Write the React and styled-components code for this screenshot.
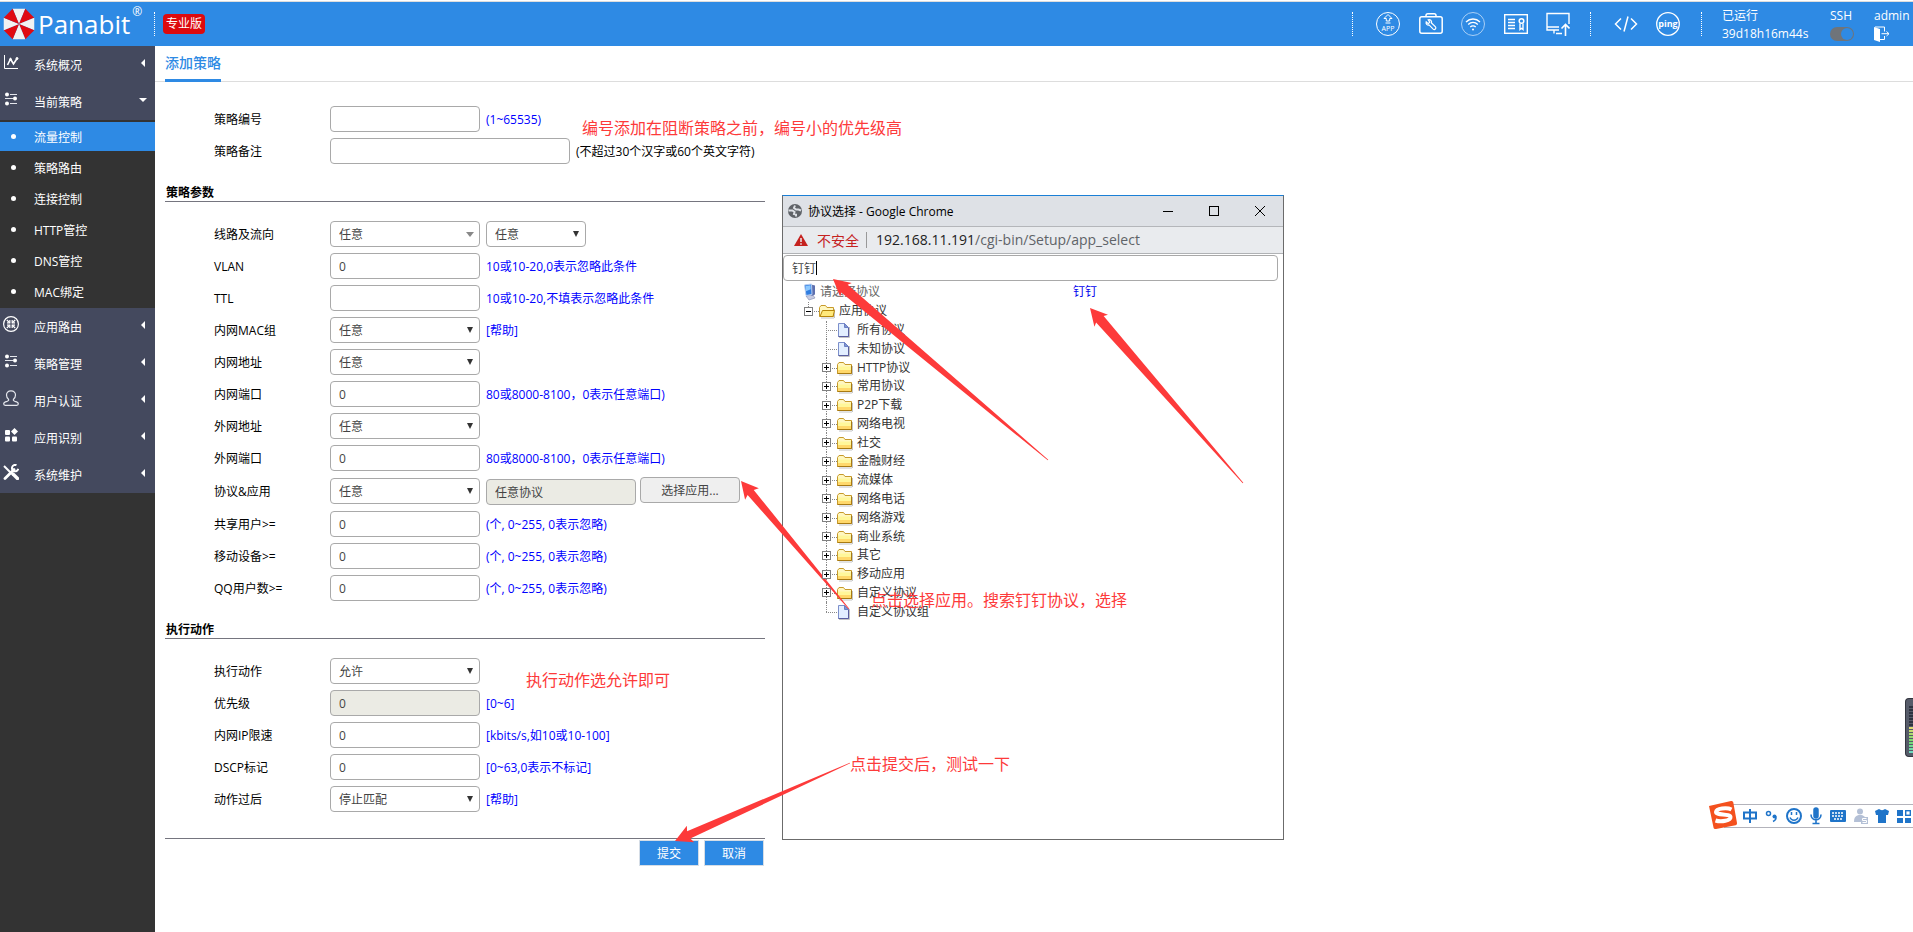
import React from 'react'
// style
import styled, { createGlobalStyle, css } from 'styled-components'

const BLUE = '#2e8ae4'
const RED = '#fd3a3a'

const subMenu = ['流量控制', '策略路由', '连接控制', 'HTTP管控', 'DNS管控', 'MAC绑定']

const menu = [
    { icon: 'chart', name: '系统概况' },
    { icon: 'sliders', name: '当前策略', children: subMenu },
    { icon: 'route', name: '应用路由' },
    { icon: 'sliders', name: '策略管理' },
    { icon: 'user', name: '用户认证' },
    { icon: 'apps', name: '应用识别' },
    { icon: 'tools', name: '系统维护' },
]

const portHint = '80或8000-8100，0表示任意端口)'
const countHint = '(个, 0~255, 0表示忽略)'

const tree = [
    { name: '所有协议', leaf: true },
    { name: '未知协议', leaf: true },
    { name: 'HTTP协议' },
    { name: '常用协议' },
    { name: 'P2P下载' },
    { name: '网络电视' },
    { name: '社交' },
    { name: '金融财经' },
    { name: '流媒体' },
    { name: '网络电话' },
    { name: '网络游戏' },
    { name: '商业系统' },
    { name: '其它' },
    { name: '移动应用' },
    { name: '自定义协议' },
    { name: '自定义协议组', leaf: true },
]

const MenuIcon = ({ name }) => {
    const icons = {
        chart: (
            <g fill="none" stroke="#fff">
                <path d="M1.5 1v13.5H15" />
                <path d="M4.5 11l3-6 3 5L14 4.5" strokeWidth="1.6" />
                <circle cx="7.5" cy="5.5" r="1" fill="#fff" />
                <circle cx="14" cy="4.5" r="1" fill="#fff" />
            </g>
        ),
        sliders: (
            <g stroke="#e4e6ec" strokeWidth="1.2" fill="#fff">
                <path d="M7 3.5h7M2 7.5h8M7 12.5h7" />
                <circle cx="4" cy="3.5" r="2" stroke="none" />
                <circle cx="12" cy="7.5" r="2" stroke="none" />
                <circle cx="4" cy="12.5" r="2" stroke="none" />
            </g>
        ),
        route: (
            <g fill="none" stroke="#fff" strokeWidth="1.2">
                <circle cx="8" cy="8" r="7.4" />
                <path d="M3.8 4l3 2.8M12.2 4l-3 2.8M3.8 12l3-2.8M12.2 12l-3-2.8" />
                <path d="M6.8 4v2.8H4M9.200 4v2.800H12M6.800 12V9.200H4M9.200 12V9.200H12" />
            </g>
        ),
        user: (
            <g fill="none" stroke="#e4e6ec" strokeWidth="1.2">
                <path d="M8 .8c-3 0-4.500 2-4.500 4.200 0 2 .9 3.300 2 4.300.4 1 .2 1.500-1.500 2-2 .5-3.300 1-3.300 2.500 0 1 .6 1.500 1.500 1.500h11.600c.9 0 1.500-.5 1.500-1.500 0-1.500-1.300-2-3.300-2.500-1.700-.5-1.900-1-1.500-2 1.100-1 2-2.300 2-4.300C12.500 2.800 11 .8 8 .8z" />
            </g>
        ),
        apps: (
            <g fill="#fff">
                <rect x="2" y="3" width="5" height="5" rx="1" />
                <path d="M11.5 1L15 4.500 11.500 8 8 4.500z" />
                <rect x="2" y="9.500" width="5" height="5" rx="1" />
                <rect x="9" y="9.500" width="5" height="5" rx="1" />
            </g>
        ),
        tools: (
            <g stroke="#fff" fill="none">
                <path d="M1 2l8 8" strokeWidth="2" />
                <path d="M10 10l4.500 4.500" strokeWidth="3.400" strokeLinecap="round" />
                <path d="M2 14.500L11 5.500" strokeWidth="2.800" strokeLinecap="round" />
                <path d="M13.500 1.200a3.200 3.200 0 1 0 1.800 3.600" strokeWidth="2" />
            </g>
        ),
    }
    return (
        <svg width="16" height="16" viewBox="0 0 16 16" aria-hidden="true">
            {icons[name]}
        </svg>
    )
}

// octagon cut in eight sectors, white and red by turns
const UmbrellaLogo = () => {
    const point = (i) => {
        const a = ((i * 45 - 112.5) * Math.PI) / 180
        return `${17 + 16.5 * Math.cos(a)},${17 + 16.5 * Math.sin(a)}`
    }
    return (
        <svg width="34" height="34" viewBox="0 0 34 34" aria-hidden="true">
            {[0, 1, 2, 3, 4, 5, 6, 7].map((i) => (
                <polygon key={i} points={`17,17 ${point(i)} ${point(i + 1)}`} fill={i % 2 ? '#e00a12' : '#f2f2f2'} />
            ))}
        </svg>
    )
}

const HeaderIcon = ({ name }) => {
    const icons = {
        app: (
            <>
                <circle cx="12" cy="12" r="11.5" />
                <path d="M12 2.500L8 6.500h2.300V9h3.400V6.500H16z" />
                <path d="M9.500 11h5" />
                <text x="12" y="19" textAnchor="middle" fontSize="7" fill="#fff" stroke="none">APP</text>
            </>
        ),
        toolbox: (
            <>
                <rect x=".8" y="4.800" width="22.400" height="16.400" rx="2" strokeWidth="1.500" />
                <path d="M7 4.500V3.500c0-1.200.6-1.800 1.800-1.800h6.400c1.200 0 1.800.6 1.800 1.800v1" strokeWidth="1.500" />
                <path d="M9.200 7.800c1.900-.6 3.900.9 3.300 3.200l4 3.800c1.200 1.500-.8 3.500-2.300 2.300l-3.900-4c-2.200.5-3.700-1.300-3.100-3.200l2 1.700 1.600-1.500z" strokeWidth="1.200" />
            </>
        ),
        wifi: (
            <>
                <circle cx="12" cy="12" r="11.5" stroke="#a9cff5" />
                <path d="M5 10c4-4 10-4 14 0M7.200 12.500c2.800-2.800 6.800-2.800 9.600 0M9.300 15c1.500-1.600 3.900-1.600 5.400 0" strokeWidth="1.300" />
                <circle cx="12" cy="17.500" r="1" fill="#fff" stroke="none" />
            </>
        ),
        licence: (
            <>
                <rect x=".7" y="2.700" width="22.600" height="18.600" strokeWidth="1.400" />
                <path d="M4 7.500h7M4 10.500h7M4 13.500h7M4 16.500h7" strokeWidth="1.400" />
                <circle cx="17.500" cy="9" r="2.300" strokeWidth="1.500" />
                <path d="M16 11.500v6l1.500-1.200 1.500 1.200v-6" strokeWidth="1.400" />
            </>
        ),
        monitor: (
            <>
                <path d="M13 18H1V1.500h22V12" strokeWidth="1.400" />
                <path d="M1 15h12M8 18v3.500M10 21.500h6" strokeWidth="1.400" />
                <path d="M19.500 24V12.500M15.500 16.500l4-4 4 4" strokeWidth="1.600" />
            </>
        ),
        code: <path d="M7 6.500L1.500 12 7 17.500M17 6.500l5.500 5.500L17 17.500M14 4.500l-4 15" strokeWidth="1.500" />,
        ping: (
            <>
                <circle cx="12" cy="12" r="11.3" strokeWidth="1.3" />
                <text x="12" y="15" textAnchor="middle" fontSize="9" fontWeight="700" fill="#fff" stroke="none">ping</text>
            </>
        ),
    }
    return (
        <svg width="24" height="24" viewBox="0 0 24 24" fill="none" stroke="#fff" aria-hidden="true">
            {icons[name]}
        </svg>
    )
}

const Caret = ({ wide }) => (
    <CaretSvg width="8" height="8" viewBox="0 0 8 8" aria-hidden="true">
        <path d={wide ? 'M0 2h8L4 7z' : 'M1 1h6L4 7z'} fill={wide ? '#888' : '#333'} />
    </CaretSvg>
)

const Picker = ({ id, value, small, wide, label }) => (
    <PickerBox $small={small}>
        <Select id={id} aria-label={label} defaultValue={value}>
            <option>{value}</option>
        </Select>
        <Caret wide={wide} />
    </PickerBox>
)

const Field = ({ id, label, hint, help, plainHint, select, wide, children, ...rest }) => (
    <FieldRow>
        <label htmlFor={id}>{label}</label>
        {select ? <Picker id={id} value={select} wide={wide} /> : <Input id={id} {...rest} />}
        {children}
        {hint && <Hint $plain={plainHint}>{hint}</Hint>}
        {help && <HelpLink href="#help">[帮助]</HelpLink>}
    </FieldRow>
)

const FolderIcon = ({ open }) => (
    <svg width="18" height="16" viewBox="0 0 18 16" aria-hidden="true">
        <path d="M2 15h13M15.500 6v9" stroke="#c4c4c4" fill="none" />
        <path d="M.5 13.500v-9L2 2.500h4.500l1.500 2h6.500v9z" fill="#fff7c0" stroke="#c79a2b" />
        {open
            ? <path d="M3.500 7.500h12l-1.500 6H1z" fill="#ffe97c" stroke="#b8860b" />
            : (
                <>
                    <path d="M1 6.500h13v4H1z" fill="#fff79a" />
                    <path d="M1 10h13v3H1z" fill="#ffd86b" />
                    <path d="M.5 13.500h14v-8" fill="none" stroke="#a87a12" />
                </>
            )}
    </svg>
)

const PageIcon = () => (
    <svg width="18" height="16" viewBox="0 0 18 16" aria-hidden="true">
        <path d="M2 15.500h10.500V5" stroke="#c4c4c4" fill="none" />
        <path d="M1.500 1.500h6l4 4v9h-10z" fill="#e3efff" stroke="#7c8fcb" />
        <path d="M7.500 1.500v4h4z" fill="#7f96cf" stroke="#6b7fc4" />
        <path d="M11.500 6v8.500h-10" stroke="#5a5fa0" fill="none" />
    </svg>
)

const ComputerIcon = () => (
    <svg width="18" height="18" viewBox="0 0 18 18" aria-hidden="true">
        <path d="M6 13l7-1 2 3-6 2z" fill="#c7cbe0" stroke="#8088b0" strokeWidth=".6" />
        <path d="M11 1.500l4 1v9l-3.500 1.500z" fill="#5d6fae" />
        <path d="M4.500 2l7-1 .5 10.500-6 1z" fill="#2f7de0" stroke="#b9cdf0" />
        <path d="M5.500 3l5-.8.2 4-4.700 2z" fill="#8cc8ff" />
    </svg>
)

const Expander = ({ open }) => (
    <svg width="9" height="9" viewBox="0 0 9 9" aria-hidden="true">
        <rect x=".5" y=".5" width="8" height="8" fill="#fff" stroke="#808080" />
        <path d={open ? 'M2 4.500h5' : 'M2 4.500h5M4.500 2v5'} stroke="#000" />
    </svg>
)

// tapered arrow: a broad head at the tip, a shaft that thins out to the tail
const arrowPoints = ({ tip, tail, neck }) => {
    const dx = tail[0] - tip[0]
    const dy = tail[1] - tip[1]
    const len = Math.hypot(dx, dy)
    const at = (along, side) => {
        const x = tip[0] + (dx * along - dy * side) / len
        const y = tip[1] + (dy * along + dx * side) / len
        return `${x},${y}`
    }
    return [at(0, 0), at(17, 9), at(15, neck), at(len, 0.4), at(len, -0.4), at(15, -neck), at(17, -9)].join(' ')
}

const arrows = [
    { tip: [833, 279], tail: [1048, 460], neck: 5 },
    { tip: [1090, 308], tail: [1243, 483], neck: 5 },
    { tip: [741, 481], tail: [849, 609], neck: 4 },
    { tip: [675, 841], tail: [850, 763], neck: 4 },
]

const notes = [
    { x: 582, y: 116, text: '编号添加在阻断策略之前，编号小的优先级高' },
    { x: 871, y: 588, text: '点击选择应用。搜索钉钉协议，选择' },
    { x: 526, y: 668, text: '执行动作选允许即可' },
    { x: 850, y: 752, text: '点击提交后，测试一下' },
]

const TopBar = () => (
    <Header>
        <Brand>
            <UmbrellaLogo />
            <strong>Panabit</strong>
            <sup>®</sup>
        </Brand>
        <Dots />
        <Edition>专业版</Edition>
        <HeaderRight>
            <Dots />
            <IconNav $wide>
                {['app', 'toolbox', 'wifi', 'licence', 'monitor'].map((name) => (
                    <a href={`#${name}`} key={name} aria-label={name}><HeaderIcon name={name} /></a>
                ))}
            </IconNav>
            <Dots />
            <IconNav>
                {['code', 'ping'].map((name) => (
                    <a href={`#${name}`} key={name} aria-label={name}><HeaderIcon name={name} /></a>
                ))}
            </IconNav>
            <Dots />
            <Status $width={108}>
                <span>已运行</span>
                <span>39d18h16m44s</span>
            </Status>
            <Status $width={44}>
                <label htmlFor="ssh">SSH</label>
                <Toggle id="ssh" type="checkbox" />
            </Status>
            <Status $width={39}>
                <span>admin</span>
                <a href="#logout" aria-label="logout">
                    <svg width="16" height="16" viewBox="0 0 16 16" aria-hidden="true">
                        <path d="M0 1l6 2v13l-6-2z" fill="#fff" />
                        <path d="M1 1h9.500v4.500M10.500 10v3.500H6M7.500 7.700H15M12.500 5.500L15 7.700l-2.500 2.300" fill="none" stroke="#fff" />
                    </svg>
                </a>
            </Status>
        </HeaderRight>
    </Header>
)

const SideMenu = () => (
    <Sidebar>
        {menu.map((item) => (
            <React.Fragment key={item.name}>
                <MenuItem href="#menu">
                    <MenuIcon name={item.icon} />
                    <span>{item.name}</span>
                    <svg width="8" height="8" viewBox="0 0 8 8" aria-hidden="true">
                        <path d={item.children ? 'M0 2h8L4 6z' : 'M6 0v8L2 4z'} fill="#fff" />
                    </svg>
                </MenuItem>
                {item.children && (
                    <SubMenu>
                        {item.children.map((child, i) => (
                            <li key={child}><SubLink href="#sub" $active={i === 0}>{child}</SubLink></li>
                        ))}
                    </SubMenu>
                )}
            </React.Fragment>
        ))}
    </Sidebar>
)

const PolicyForm = () => (
    <Form onSubmit={(e) => e.preventDefault()}>
        <Fields>
            <Field id="number" label="策略编号" hint="(1~65535)" />
            <Field id="remark" label="策略备注" hint="(不超过30个汉字或60个英文字符)" plainHint $long />
        </Fields>
        <SectionTitle>策略参数</SectionTitle>
        <Fields>
            <Field id="line" label="线路及流向" select="任意" wide>
                <Picker value="任意" small label="流向" />
            </Field>
            <Field id="vlan" label="VLAN" defaultValue="0" hint="10或10-20,0表示忽略此条件" />
            <Field id="ttl" label="TTL" hint="10或10-20,不填表示忽略此条件" />
            <Field id="macgroup" label="内网MAC组" select="任意" help />
            <Field id="inaddr" label="内网地址" select="任意" />
            <Field id="inport" label="内网端口" defaultValue="0" hint={portHint} />
            <Field id="outaddr" label="外网地址" select="任意" />
            <Field id="outport" label="外网端口" defaultValue="0" hint={portHint} />
            <Field id="app" label="协议&应用" select="任意">
                <AppPick>
                    <Input aria-label="已选协议" defaultValue="任意协议" readOnly $muted />
                    <PickButton type="button">选择应用...</PickButton>
                </AppPick>
            </Field>
            <Field id="shared" label="共享用户>=" defaultValue="0" hint={countHint} />
            <Field id="mobile" label="移动设备>=" defaultValue="0" hint={countHint} />
            <Field id="qq" label="QQ用户数>=" defaultValue="0" hint={countHint} />
        </Fields>
        <SectionTitle>执行动作</SectionTitle>
        <Fields>
            <Field id="action" label="执行动作" select="允许" />
            <Field id="priority" label="优先级" defaultValue="0" readOnly $muted hint="[0~6]" />
            <Field id="iplimit" label="内网IP限速" defaultValue="0" hint="[kbits/s,如10或10-100]" />
            <Field id="dscp" label="DSCP标记" defaultValue="0" hint="[0~63,0表示不标记]" />
            <Field id="after" label="动作过后" select="停止匹配" help />
        </Fields>
        <Actions>
            <button type="submit">提交</button>
            <button type="button">取消</button>
        </Actions>
    </Form>
)

const ProtocolWindow = () => (
    <Window>
        <TitleBar>
            <svg width="16" height="16" viewBox="0 0 16 16" aria-hidden="true">
                <circle cx="8" cy="8" r="7" fill="#5f6368" />
                <path d="M1.500 7.500h4l2 1.500-.5 2 2 .5v2M8 2.500l-1 2.500 2 1.500h2.500l2.500 1" stroke="#dee1e6" strokeWidth="2" fill="none" />
            </svg>
            <span>协议选择 - Google Chrome</span>
            <WindowButton type="button" aria-label="minimize">
                <svg width="10" height="10" viewBox="0 0 10 10"><path d="M0 5.500h10" stroke="#000" /></svg>
            </WindowButton>
            <WindowButton type="button" aria-label="maximize">
                <svg width="10" height="10" viewBox="0 0 10 10"><rect x=".5" y=".5" width="9" height="9" fill="none" stroke="#000" /></svg>
            </WindowButton>
            <WindowButton type="button" aria-label="close">
                <svg width="10" height="10" viewBox="0 0 10 10"><path d="M0 0l10 10M10 0L0 10" stroke="#000" /></svg>
            </WindowButton>
        </TitleBar>
        <AddressBar>
            <svg width="16" height="14" viewBox="0 0 16 14" aria-hidden="true">
                <path d="M8 1l7 12H1z" fill="#c5221f" />
                <path d="M8 5v4M8 10.300v1.500" stroke="#e9ebee" strokeWidth="1.5" />
            </svg>
            <em>不安全</em>
            <p>192.168.11.191<span>/cgi-bin/Setup/app_select</span></p>
        </AddressBar>
        <SearchBox>
            <input aria-label="搜索协议" defaultValue="钉钉" />
            <i />
        </SearchBox>
        <WindowBody>
            <Tree>
                <TreeHead><ComputerIcon />请选择协议</TreeHead>
                <TreeItem $depth={0}>
                    <Guide $open><Expander open /></Guide>
                    <FolderIcon open />
                    应用协议
                </TreeItem>
                {tree.map((node, i) => (
                    <TreeItem key={node.name} $depth={1}>
                        <Guide $last={i === tree.length - 1}>{!node.leaf && <Expander />}</Guide>
                        {node.leaf ? <PageIcon /> : <FolderIcon />}
                        {node.name}
                    </TreeItem>
                ))}
            </Tree>
            <ResultLink href="#dingding">钉钉</ResultLink>
        </WindowBody>
    </Window>
)

const InputMethodBar = () => (
    <ImeBar>
        <svg width="28" height="28" viewBox="0 0 28 28" aria-hidden="true">
            <path d="M0 5L22 0c1.500 0 2 .5 2.300 1.500L28 22c0 1.500-.5 2-1.500 2.300L7 28c-1.500 0-2.300-.5-2.500-1.500z" fill="#f4511e" />
            <path d="M22.500 8.500c-5-2.500-15-1-15.500 2.500-.3 3.500 14 1.500 14.500 5 .3 3.500-9 5.500-15 3.500" stroke="#fff" strokeWidth="4" fill="none" />
        </svg>
        <svg width="176" height="20" viewBox="0 0 176 20" fill="none" stroke="#1f74c9" aria-hidden="true">
            <path d="M7 6.500h12v6H7zM13 3v14" strokeWidth="2" />
            <circle cx="31.5" cy="7.5" r="2" strokeWidth="1.5" />
            <circle cx="37.5" cy="10.5" r="2" fill="#1f74c9" stroke="none" />
            <path d="M38.800 10.500c.5 2-.5 4-2.800 5" strokeWidth="1.6" />
            <circle cx="57" cy="10" r="7" strokeWidth="2" />
            <path d="M54.500 6v3M59.500 6v3M53 11.500c1.500 3.500 6.500 3.500 8 0" strokeWidth="1.5" />
            <path d="M79 4v6" strokeWidth="5.5" strokeLinecap="round" />
            <path d="M74 8.500c0 7 10 7 10 0M79 14v4M75.500 17.500h7" strokeWidth="1.6" />
            <rect x="93" y="4" width="16" height="12" rx="1" fill="#1f74c9" stroke="none" />
            <path d="M95 7h12M95 10h12M97 13h8" stroke="#fff" strokeWidth="1.5" strokeDasharray="2 1" />
            <g fill="#b4c0d6" stroke="none">
                <circle cx="123" cy="5.5" r="3" />
                <path d="M117 16c0-5 2-7 6-7s5 2 5 3v4z" />
                <rect x="124" y="11" width="7" height="7" />
                <path d="M129.500 12.500h-4v2h4v2h-4" fill="none" stroke="#fff" />
            </g>
            <path d="M142 3l-4 2 1 4h2v8h8V9h2l1-4-4-2c-1.500 1.500-4.500 1.500-6 0z" fill="#1f74c9" stroke="none" />
            <path d="M160 4h6v6h-6zM160 12h6v5h-6zM168 12h6v5h-6z" fill="#1f74c9" stroke="none" />
            <rect x="168.7" y="4.7" width="4.6" height="4.6" strokeWidth="1.4" />
        </svg>
    </ImeBar>
)

const VolumeGauge = () => (
    <Gauge>
        {Array.from({ length: 16 }, (_, i) => (
            <i key={i} style={{ background: i < 7 ? '#2e3340' : `hsl(${60 + (i - 7) * 13}, 60%, 65%)` }} />
        ))}
    </Gauge>
)

const App = () => {
    return (
        <Page>
            <GlobalStyle />
            <TopBar />
            <Columns>
                <SideMenu />
                <Content>
                    <Tabs><a href="#add">添加策略</a></Tabs>
                    <PolicyForm />
                </Content>
            </Columns>
            <ProtocolWindow />
            <ArrowLayer aria-hidden="true">
                {arrows.map((arrow) => (
                    <polygon key={arrow.tip[0]} points={arrowPoints(arrow)} fill={RED} />
                ))}
            </ArrowLayer>
            {notes.map((note) => (
                <Note key={note.text} $x={note.x} $y={note.y}>{note.text}</Note>
            ))}
            <VolumeGauge />
            <InputMethodBar />
        </Page>
    )
}

const GlobalStyle = createGlobalStyle`
    * {
        box-sizing: border-box;
    }
    body {
        margin: 0;
        background: #fff;
        color: #000;
        font-size: 12px;
    }
    body, input, select, button {
        font-family: "Open Sans", "Noto Sans CJK SC", sans-serif;
    }
    a {
        text-decoration: none;
    }
    svg {
        flex-shrink: 0;
    }
`

const Page = styled.div`
    position: relative;
    display: flex;
    flex-direction: column;
    min-height: 100vh;
    padding-top: 1px;
    overflow: hidden;
`

const Header = styled.header`
    display: flex;
    align-items: center;
    height: 45px;
    padding-left: 2px;
    border-top: 1px solid #ddd;
    background: ${BLUE};
    color: #fff;
`

const Brand = styled.div`
    display: flex;
    align-items: center;
    gap: 2px;
    width: 152px;
    strong {
        font-size: 26px;
        font-weight: 400;
        line-height: 36px;
    }
    sup {
        align-self: flex-start;
        font-size: 12px;
        line-height: 12px;
    }
`

const Dots = styled.span`
    height: 24px;
    border-left: 1px dotted #fff;
`

const Edition = styled.span`
    margin-left: 8px;
    padding: 0 3px;
    border-radius: 4px;
    background: #dd0a0e;
    line-height: 20px;
`

const HeaderRight = styled.div`
    display: flex;
    align-items: center;
    margin-left: auto;
`

const IconNav = styled.nav`
    display: flex;
    justify-content: space-between;
    width: ${({ $wide }) => ($wide ? '194px' : '66px')};
    margin: 0 ${({ $wide }) => ($wide ? '20px' : '21px')} 0 23px;
    a {
        display: flex;
    }
`

const Status = styled.div`
    display: flex;
    flex-direction: column;
    gap: 2px;
    width: ${({ $width }) => $width}px;
    padding-top: 2px;
    line-height: 16px;
    &:nth-last-child(3) {
        margin-left: 20px;
    }
    a {
        display: flex;
    }
`

const Toggle = styled.input`
    appearance: none;
    width: 24px;
    height: 14px;
    margin: 1px 0;
    border-radius: 7px;
    background: #6f747a;
    &::after {
        content: '';
        display: block;
        width: 12px;
        height: 12px;
        margin: 1px 1px 1px 11px;
        border-radius: 6px;
        background: ${BLUE};
    }
`

const Columns = styled.div`
    display: flex;
    flex: 1;
`

const Sidebar = styled.nav`
    flex: 0 0 155px;
    background: #333;
`

const MenuItem = styled.a`
    display: flex;
    align-items: flex-start;
    height: 37px;
    padding: 8px 8px 0 3px;
    background: #44495e;
    color: #fff;
    span {
        flex: 1;
        margin-left: 15px;
        line-height: 23px;
    }
    svg:last-child {
        margin-top: 5px;
    }
`

const SubMenu = styled.ul`
    margin: 0;
    padding: 2px 0 0;
    list-style: none;
`

const SubLink = styled.a`
    display: flex;
    align-items: center;
    height: 29px;
    margin-bottom: 2px;
    padding-left: 11px;
    background: ${({ $active }) => ($active ? BLUE : 'transparent')};
    color: #fff;
    &::before {
        content: '';
        width: 5px;
        height: 5px;
        margin-right: 18px;
        border-radius: 50%;
        background: #fff;
    }
`

const Content = styled.main`
    flex: 1;
`

const Tabs = styled.div`
    display: flex;
    height: 36px;
    padding-left: 10px;
    border-bottom: 1px solid #ddd;
    a {
        height: 36px;
        border-bottom: 3px solid ${BLUE};
        color: ${BLUE};
        font-size: 14px;
        font-weight: 500;
        line-height: 33px;
    }
`

const Form = styled.form`
    max-width: 600px;
    margin: 24px 0 0 10px;
`

const Fields = styled.div`
    display: flex;
    flex-direction: column;
    gap: 6px;
`

const FieldRow = styled.div`
    display: flex;
    align-items: center;
    gap: 6px;
    padding-left: 49px;
    white-space: nowrap;
    > label {
        width: 110px;
    }
`

const control = css`
    height: 26px;
    padding: 0 8px;
    border: 1px solid #a9a9a9;
    border-radius: 4px;
    background: #fff;
    color: #444;
    font-size: 12px;
`

const Input = styled.input`
    ${control}
    width: ${({ $long }) => ($long ? '240px' : '150px')};
    background: ${({ $muted }) => ($muted ? '#ebebe4' : '#fff')};
`

const PickerBox = styled.div`
    position: relative;
    width: ${({ $small }) => ($small ? '100px' : '150px')};
`

const Select = styled.select`
    ${control}
    appearance: none;
    display: block;
    width: 100%;
`

const CaretSvg = styled.svg`
    position: absolute;
    top: 9px;
    right: 6px;
    pointer-events: none;
`

const AppPick = styled.div`
    display: flex;
    gap: 4px;
    height: 28px;
    input {
        align-self: flex-end;
    }
`

const PickButton = styled.button`
    ${control}
    width: 100px;
    background: #efefef;
`

const Hint = styled.span`
    color: ${({ $plain }) => ($plain ? '#000' : '#00f')};
`

const HelpLink = styled.a`
    color: #00f;
`

const SectionTitle = styled.h2`
    margin: 20px 0 19px;
    padding-left: 1px;
    border-bottom: 1px solid #75757f;
    font-size: 12px;
    font-weight: 700;
    line-height: 17px;
`

const Actions = styled.div`
    display: flex;
    justify-content: flex-end;
    gap: 5px;
    margin-top: 26px;
    padding: 1px 1px 0 0;
    border-top: 1px solid #75757f;
    button {
        width: 60px;
        height: 26px;
        padding: 0;
        border: 1px solid #d5dde6;
        background: ${BLUE};
        color: #fff;
        font-size: 12px;
    }
`

const Window = styled.section`
    position: absolute;
    top: 195px;
    left: 782px;
    width: 502px;
    height: 645px;
    border: 1px solid #6b6b6b;
    border-top-color: #1a7fd6;
    background: #fff;
`

const TitleBar = styled.div`
    display: flex;
    align-items: center;
    height: 31px;
    padding-left: 4px;
    border-bottom: 1px solid #b4b6ba;
    background: #dee1e6;
    span {
        flex: 1;
        margin-left: 5px;
    }
`

const WindowButton = styled.button`
    display: flex;
    justify-content: center;
    width: 46px;
    padding: 0;
    border: 0;
    background: none;
`

const AddressBar = styled.div`
    display: flex;
    align-items: center;
    height: 27px;
    padding-left: 10px;
    border-bottom: 1px solid #b0b2b5;
    background: #e9ebee;
    font-size: 14px;
    em {
        margin: 0 7px 0 8px;
        color: #c5221f;
        font-style: normal;
    }
    p {
        margin: 0;
        padding-left: 9px;
        border-left: 1px solid #999;
        color: #222;
        line-height: 16px;
    }
    span {
        color: #5f6368;
    }
`

const SearchBox = styled.div`
    position: relative;
    margin: 1px 5px 2px 0;
    input {
        ${control}
        display: block;
        width: 100%;
    }
    i {
        position: absolute;
        top: 6px;
        left: 33px;
        height: 14px;
        border-left: 1px solid #000;
    }
`

const WindowBody = styled.div`
    display: flex;
    align-items: flex-start;
`

// the eighteen lines share the height between them
const Tree = styled.ul`
    display: flex;
    flex-direction: column;
    width: 290px;
    height: 338px;
    margin: 0;
    padding: 0 0 0 17px;
    color: #333;
    list-style: none;
    li {
        display: flex;
        flex: 1;
        align-items: center;
        gap: 2px;
        min-height: 0;
        line-height: 18px;
    }
`

const TreeHead = styled.li`
    color: #666;
`

const TreeItem = styled.li`
    padding-left: ${({ $depth }) => $depth * 18}px;
`

const Guide = styled.span`
    position: relative;
    display: flex;
    align-items: center;
    align-self: stretch;
    width: 19px;
    margin-right: -2px;
    padding-left: 4px;
    &::before {
        content: '';
        position: absolute;
        top: 0;
        bottom: ${({ $last, $open }) => ($last || $open ? '50%' : '0')};
        left: 8px;
        border-left: 1px dotted #888;
    }
    &::after {
        content: '';
        position: absolute;
        top: 50%;
        right: 0;
        left: 8px;
        border-top: 1px dotted #888;
    }
    svg {
        position: relative;
        z-index: 1;
    }
`

const ResultLink = styled.a`
    color: #00e;
    line-height: 18px;
`

const ArrowLayer = styled.svg`
    position: absolute;
    top: 0;
    left: 0;
    width: 100%;
    height: 100%;
    pointer-events: none;
`

const Note = styled.p`
    position: absolute;
    top: ${({ $y }) => $y}px;
    left: ${({ $x }) => $x}px;
    margin: 0;
    color: ${RED};
    font-size: 16px;
    line-height: 24px;
    white-space: nowrap;
`

const Gauge = styled.div`
    position: absolute;
    top: 698px;
    right: 0;
    display: flex;
    flex-direction: column;
    gap: 1px;
    width: 8px;
    height: 59px;
    padding: 7px 0 0 3px;
    border: 1px solid #33363f;
    border-right: 0;
    border-radius: 4px 0 0 4px;
    background: #565b69;
    i {
        height: 2px;
    }
`

const ImeBar = styled.div`
    position: absolute;
    top: 804px;
    right: 0;
    display: flex;
    align-items: center;
    height: 24px;
    border-top: 1px solid #b3b3bb;
    border-bottom: 1px solid #b3b3bb;
    background: #fff;
    svg:first-child {
        margin: -2px 0 0 -15px;
    }
`

export default App
